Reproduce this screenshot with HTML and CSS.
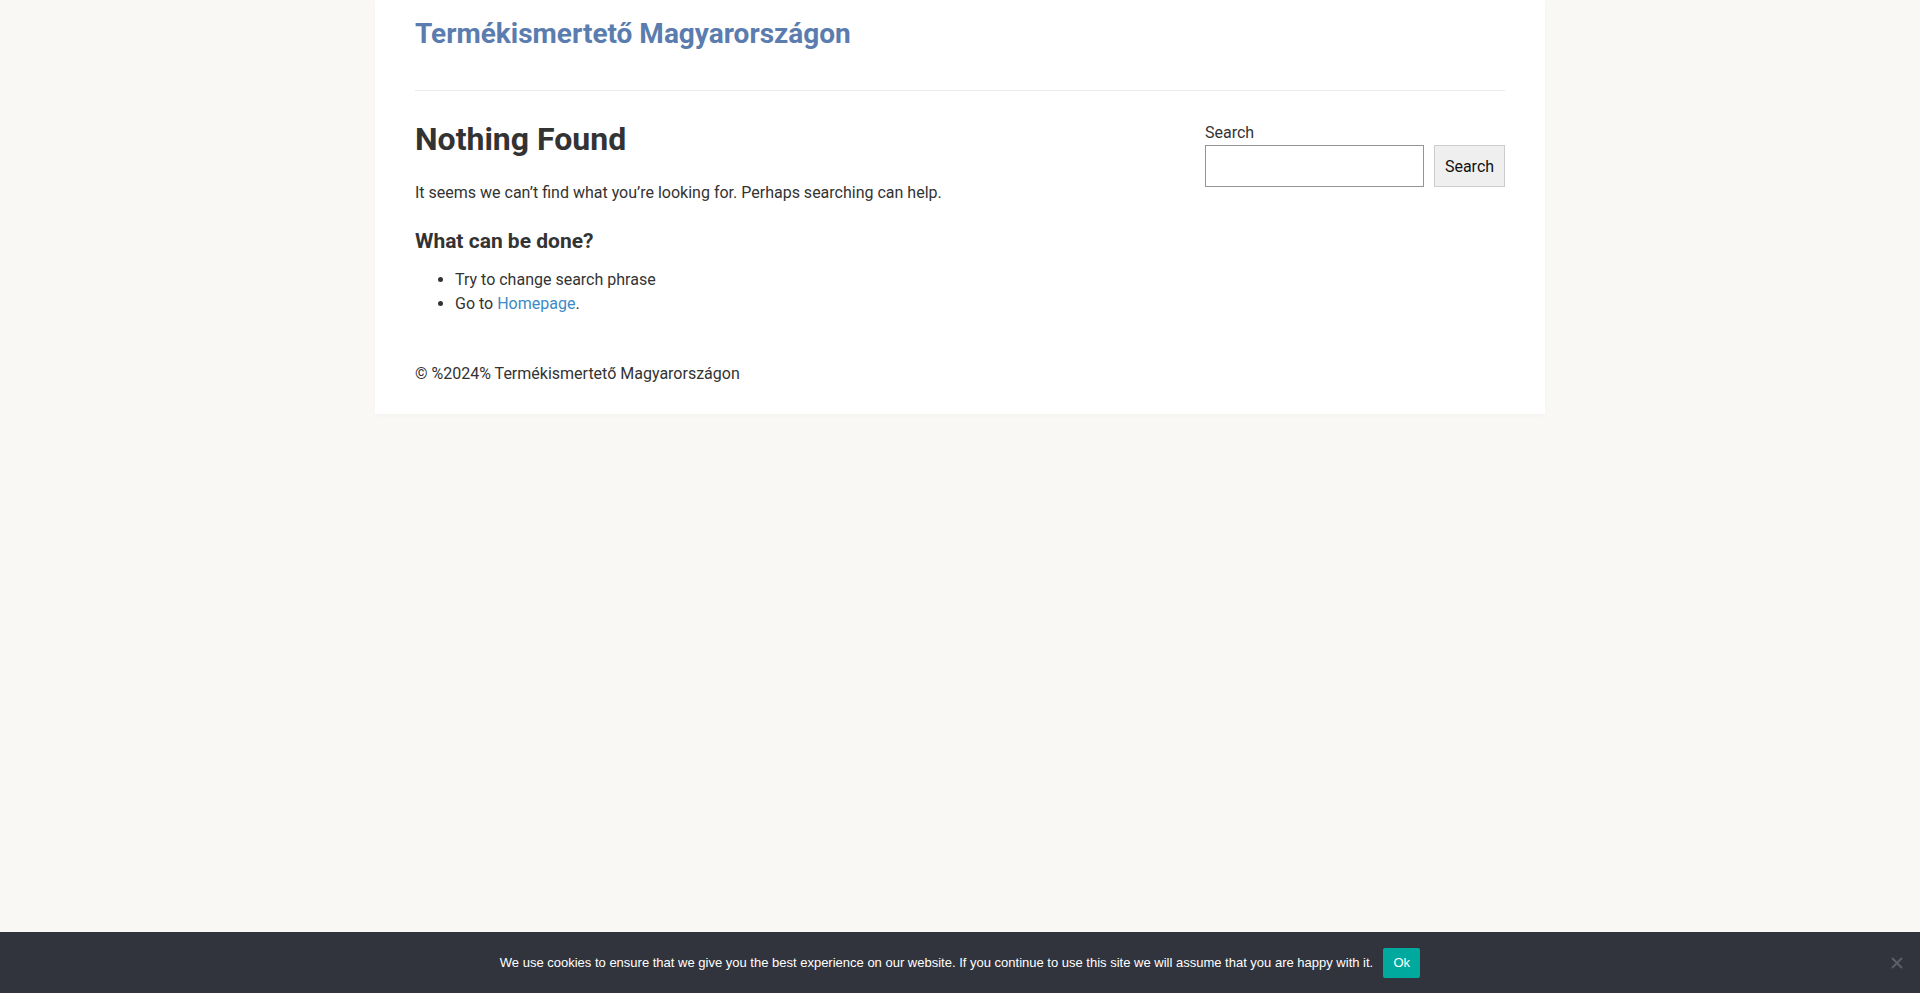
FILE: index.html
```html
<!DOCTYPE html>
<html lang="hu">
<head>
<meta charset="utf-8">
<title>Termékismertető Magyarországon</title>
<link rel="stylesheet" href="styles.css">
</head>
<body>
<div class="site">
  <header class="site-header">
    <a class="site-title" href="#">Termékismertető Magyarországon</a>
  </header>
  <div class="content">
    <main class="main">
      <h1 class="page-title">Nothing Found</h1>
      <p class="lead">It seems we can’t find what you’re looking for. Perhaps searching can help.</p>
      <h2 class="sub-title">What can be done?</h2>
      <ul class="tips">
        <li>Try to change search phrase</li>
        <li>Go to <a href="#">Homepage</a>.</li>
      </ul>
    </main>
    <aside class="sidebar">
      <form class="search">
        <label class="search-label" for="s">Search</label>
        <div class="search-row">
          <input class="search-input" id="s" type="text">
          <button class="search-btn" type="button">Search</button>
        </div>
      </form>
    </aside>
  </div>
  <footer class="site-footer">© %2024% Termékismertető Magyarországon</footer>
</div>
<div class="cookie-bar">
  <div class="cookie-inner">
    <span class="cookie-text">We use cookies to ensure that we give you the best experience on our website. If you continue to use this site we will assume that you are happy with it.</span>
    <button class="cookie-ok" type="button">Ok</button>
  </div>
  <span class="cookie-close">
    <svg width="12" height="12" viewBox="0 0 12 12"><path d="M1 1L11 11M11 1L1 11" stroke="#5d5f68" stroke-width="2"/></svg>
  </span>
</div>
</body>
</html>
```
FILE: styles.css
```css
* { box-sizing: border-box; }
html, body { margin: 0; padding: 0; }
body {
  background: #f9f8f5;
  font-family: Roboto, "Liberation Sans", Arial, sans-serif;
  font-size: 16px;
  line-height: 24px;
  color: #333;
  height: 993px;
}
.site {
  width: 1170px;
  margin: 0 auto;
  background: #fff;
  padding: 0 40px 28px;
  box-shadow: 0 2px 4px rgba(0,0,0,0.02);
}
.site-header {
  padding-top: 16px;
  padding-bottom: 38px;
  border-bottom: 1px solid #ebebeb;
}
.site-title {
  display: block;
  font-size: 28px;
  line-height: 36px;
  font-weight: 700;
  color: #5a7cae;
  text-decoration: none;
}
.content {
  display: flex;
  justify-content: space-between;
  padding-top: 30px;
}
.main { flex: 1; }
.page-title {
  margin: 0;
  font-size: 32px;
  line-height: 36px;
  font-weight: 700;
  color: #333;
}
.lead { margin: 24px 0 0; }
.sub-title {
  margin: 24px 0 0;
  font-size: 21px;
  line-height: 24px;
  font-weight: 700;
  color: #333;
}
.tips {
  margin: 15px 0 0;
  padding-left: 40px;
}
.tips a { color: #3d8ac6; text-decoration: none; }
.sidebar { width: 300px; }
.search-label { display: block; line-height: 24px; }
.search-row { display: flex; gap: 10px; }
.search-input {
  width: 219px;
  height: 42px;
  border: 1px solid #949494;
  background: #fff;
  margin: 0;
}
.search-btn {
  width: 71px;
  height: 42px;
  border: 1px solid #ccc;
  background: #efefef;
  font-family: Roboto, "Liberation Sans", Arial, sans-serif;
  font-size: 16px;
  color: #111;
  padding: 0;
}
.site-footer {
  margin-top: 46px;
  line-height: 24px;
}
.cookie-bar {
  position: fixed;
  left: 0;
  right: 0;
  bottom: 0;
  height: 61px;
  background: #32343d;
  display: flex;
  align-items: center;
  justify-content: center;
}
.cookie-inner {
  display: flex;
  align-items: center;
  gap: 10px;
}
.cookie-text {
  font-family: "Liberation Sans", Arial, sans-serif;
  font-size: 13px;
  color: #fff;
}
.cookie-ok {
  width: 37px;
  height: 30px;
  border: 0;
  border-radius: 2px;
  background: #00a99d;
  color: #fff;
  font-family: "Liberation Sans", Arial, sans-serif;
  font-size: 13px;
  padding: 0;
}
.cookie-close {
  position: absolute;
  right: 17px;
  top: 25px;
  width: 12px;
  height: 12px;
  display: flex;
}
```
